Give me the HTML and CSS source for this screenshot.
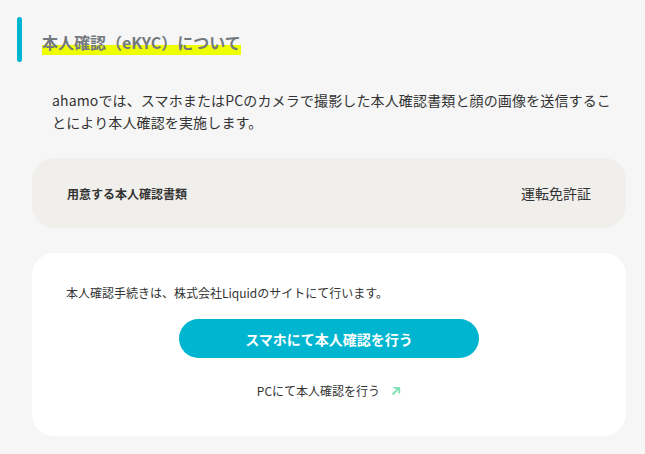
FILE: index.html
```html
<!DOCTYPE html>
<html lang="ja">
<head>
<meta charset="utf-8">
<link rel="stylesheet" href="styles.css">
</head>
<body>
<div class="page">
  <div class="heading">
    <div class="bar"></div>
    <h2 class="title"><span class="mark">本人確認（eKYC）について</span></h2>
  </div>
  <p class="lead">ahamoでは、スマホまたはPCのカメラで撮影した本人確認書類と顔の画像を送信することにより本人確認を実施します。</p>
  <div class="docs">
    <div class="docs-label">用意する本人確認書類</div>
    <div class="docs-value">運転免許証</div>
  </div>
  <div class="card">
    <p class="card-text">本人確認手続きは、株式会社Liquidのサイトにて行います。</p>
    <a class="btn">スマホにて本人確認を行う</a>
    <a class="pc-link">PCにて本人確認を行う<svg class="arrow" width="10" height="10" viewBox="0 0 10 10"><path d="M1.5 8.5 L8 2 M2.5 1.8 H8.3 V7.6" fill="none" stroke="#7fe0b4" stroke-width="1.8"/></svg></a>
  </div>
</div>
</body>
</html>
```
FILE: styles.css
```css
* { box-sizing: border-box; }
html, body { margin: 0; padding: 0; }
body {
  background: #f6f6f6;
  font-family: "Noto Sans CJK JP", "Noto Sans", sans-serif;
  color: #333;
  width: 645px;
  height: 454px;
  overflow: hidden;
}
.page {
  padding: 17px 19px 0 17px;
}
.heading {
  display: flex;
  align-items: center;
  gap: 20px;
  height: 45px;
}
.bar {
  width: 5px;
  height: 45px;
  border-radius: 3px;
  background: #00b5cf;
}
.title {
  margin: 0;
  font-size: 16px;
  font-weight: 700;
  color: #74797e;
  line-height: 22px;
  padding-top: 4px;
}
.mark {
  background: linear-gradient(transparent 62%, #eeff00 62%);
  padding-bottom: 1px;
}
.lead {
  margin: 27px 0 0 35px;
  font-size: 14px;
  line-height: 22px;
  letter-spacing: 0.01em;
  color: #333;
  width: 562px;
}
.docs {
  margin: 25px 0 0 15px;
  height: 70px;
  border-radius: 22px;
  background: #f0efeb;
  display: flex;
  align-items: center;
  justify-content: space-between;
  padding: 0 35px 0 35px;
}
.docs-label {
  font-size: 12px;
  font-weight: 700;
  color: #333;
}
.docs-value {
  font-size: 14px;
  color: #333;
}
.card {
  margin: 25px 0 0 15px;
  height: 183px;
  border-radius: 22px;
  background: #fff;
  display: flex;
  flex-direction: column;
  align-items: center;
  padding: 31px 34px 0 34px;
}
.card-text {
  align-self: flex-start;
  margin: 0;
  font-size: 12px;
  line-height: 18px;
  color: #333;
}
.btn {
  margin-top: 17px;
  width: 300px;
  height: 39px;
  border-radius: 20px;
  background: #00b5cf;
  color: #fff;
  font-size: 14px;
  font-weight: 700;
  display: flex;
  align-items: center;
  justify-content: center;
}
.pc-link {
  margin-top: 24px;
  font-size: 12px;
  line-height: 18px;
  color: #333;
  display: flex;
  align-items: center;
  gap: 11px;
}
.arrow { display: block; }
```
